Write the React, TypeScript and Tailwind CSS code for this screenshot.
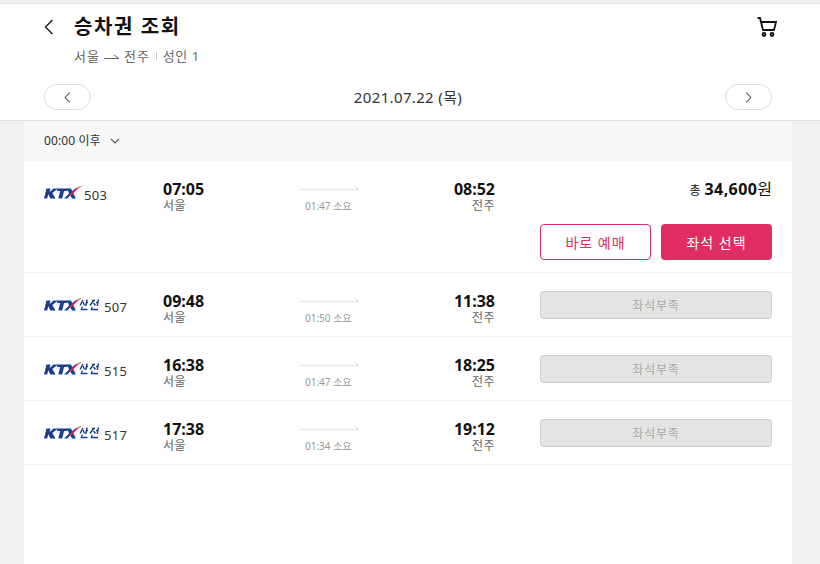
import React from "react";

const F = { fontFamily: '"Noto Sans", "Noto Sans CJK KR", sans-serif' };

function Logo({ sancheon }: { sancheon?: boolean }) {
  return (
    <svg width={sancheon ? 57 : 40} height="15" viewBox={sancheon ? "0 0 57 15" : "0 0 40 15"} className="block shrink-0 mt-[5px]">
      <g fill="#1b3f8f">
        <path d="M2.500 3.500h4l-1 3.700 4-3.700h4.500l-5.700 4.500 3.200 5.500H6.500l-2.300-4.200-1 4.200H0Z" />
        <path d="M13.500 3.500h10.500l-.7 2.600h-3.200l-1.900 7.400h-3.900l1.900-7.400h-3.300Z" />
        <path d="M23 3.500h4l1.300 2.700 2.700-2.700h2.200l-4 4.400 2.700 5.600h-4l-1.400-3.200-3.200 3.200h-3.200l5-5Z" />
      </g>
      <path d="M25 11 C28 6 33 2 39 0.500 C34 3 31 6 28.500 9.500 Z" fill="#d9244f" />
      {sancheon && (
        <g fill="none" stroke="#1b3f8f" strokeWidth="1.400">
          <path d="M39 3 L36 8.500 M39 5 L40.500 8.500 M43 2.500 L41.800 9 M42.300 5.500 H44 M38 9.500 L37.500 12.500 H43.500" />
          <path d="M48 3.500 H51 M49.500 3.500 L46 8.500 M49.500 6 L51.500 8.500 M54.500 2.500 L53.300 9 M53.800 5.500 H52 M48 10 L47.500 12.500 H54" />
        </g>
      )}
    </svg>
  );
}

function Arrow() {
  return (
    <svg width="60" height="6" viewBox="0 0 60 6" className="block">
      <path d="M0 4.500 H59" stroke="#e8e8e8" strokeWidth="1.500" fill="none" />
      <path d="M54 0.500 L59 4.500" stroke="#d5d5d5" strokeWidth="1" fill="none" />
    </svg>
  );
}

function Chevron({ dir, className }: { dir: "l" | "r"; className: string }) {
  return (
    <svg viewBox="0 0 10 16" className={className} fill="none" stroke="currentColor" strokeWidth="1.500">
      <path d={dir === "l" ? "M8.500 1 L1.500 8 L8.500 15" : "M1.500 1 L8.500 8 L1.500 15"} />
    </svg>
  );
}

function Times({ dep, arr, dur }: { dep: string; arr: string; dur: string }) {
  return (
    <>
      <div className="w-[100px] shrink-0">
        <div className="text-[16px] leading-[18px] font-bold text-[#111]">{dep}</div>
        <div className="text-[12px] leading-[12px] mt-[2px] tracking-[0.5px] text-[#666]">서울</div>
      </div>
      <div className="w-[84px] shrink-0 mt-[5px] ml-[37px] flex flex-col">
        <Arrow />
        <div className="text-[10px] leading-[12px] mt-[9px] pl-[5px] text-[#999]">{dur}</div>
      </div>
      <div className="w-[111px] shrink-0 text-right">
        <div className="text-[16px] leading-[18px] font-bold text-[#111]">{arr}</div>
        <div className="text-[12px] leading-[12px] mt-[2px] tracking-[0.5px] text-[#666]">전주</div>
      </div>
    </>
  );
}

function SoldOutRow({ num, dep, arr, dur }: { num: string; dep: string; arr: string; dur: string }) {
  return (
    <div className="h-[64px] border-b border-[#f0f0f0] flex items-start px-[20px] pt-[19px]">
      <div className="w-[119px] shrink-0 flex items-start">
        <Logo sancheon />
        <span className="text-[13px] leading-[18px] tracking-[0.3px] text-[#333] ml-[3px] mt-[6px]">{num}</span>
      </div>
      <Times dep={dep} arr={arr} dur={dur} />
      <div className="ml-auto w-[232px] h-[28px] mt-[-1px] pt-[2px] rounded-[4px] border border-[#ccc] bg-[#e4e4e4] flex items-center justify-center text-[12px] tracking-[0.8px] text-[#aaa]">
        좌석부족
      </div>
    </div>
  );
}

export default function App() {
  return (
    <div style={F} className="w-[820px] h-[564px] overflow-hidden bg-[#f1f1f1] flex flex-col">
      <div className="h-[118px] shrink-0 bg-white border-t border-b border-[#e0e0e0] mt-[3px] pl-[44px] pr-[48px] flex flex-col">
        <div className="flex items-center h-[45px]">
          <Chevron dir="l" className="w-[10px] h-[16px] text-[#222]" />
          <h1 className="ml-[20px] text-[20px] font-bold text-[#111] leading-[26px] tracking-[1.6px]">승차권 조회</h1>
          <svg viewBox="0 0 20 20" className="ml-auto mr-[-5px] w-[20px] h-[20px] text-[#111]" fill="none" stroke="currentColor" strokeWidth="1.800">
            <path d="M0.500 1 H3 L6 13 H17 L19 5 H4" />
            <circle cx="7" cy="17.500" r="1.500" />
            <circle cx="15" cy="17.500" r="1.500" />
          </svg>
        </div>
        <div className="ml-[30px] flex items-center text-[13px] leading-[18px] text-[#666] mt-[-2px]">
          <span className="tracking-[1px]">서울</span>
          <svg width="16" height="6" viewBox="0 0 16 6" className="mx-[4px] mt-[2px]" fill="none" stroke="#666" strokeWidth="1">
            <path d="M0 4.500 H15 L10 1" />
          </svg>
          <span className="tracking-[1px]">전주</span>
          <span className="mx-[6px] h-[8px] w-px bg-[#ccc]" />
          <span className="tracking-[0.5px]">성인 1</span>
        </div>
        <div className="flex items-center justify-between mt-[19px]">
          <div className="w-[47px] h-[26px] rounded-full border border-[#ddd] flex items-center justify-center text-[#555]">
            <Chevron dir="l" className="w-[7px] h-[11px]" />
          </div>
          <span className="text-[15px] text-[#333] tracking-[0.35px]">2021.07.22 (목)</span>
          <div className="w-[47px] h-[26px] rounded-full border border-[#ddd] flex items-center justify-center text-[#555]">
            <Chevron dir="r" className="w-[7px] h-[11px]" />
          </div>
        </div>
      </div>

      <div className="mx-[24px] w-[768px] flex-1 bg-white flex flex-col">
        <div className="h-[40px] shrink-0 bg-[#f7f7f7] flex items-center px-[20px] text-[12px] tracking-[0.1px] text-[#333]">
          <span>00:00 이후</span>
          <svg width="10" height="6" viewBox="0 0 10 6" className="ml-[9px]" fill="none" stroke="#555" strokeWidth="1.200">
            <path d="M1 1 L5 5 L9 1" />
          </svg>
        </div>

        <div className="h-[112px] shrink-0 border-b border-[#f0f0f0] px-[20px] pt-[19px] flex items-start">
          <div className="w-[119px] shrink-0 flex items-start">
            <Logo />
            <span className="text-[13px] leading-[18px] tracking-[0.3px] text-[#333] mt-[6px]">503</span>
          </div>
          <Times dep="07:05" arr="08:52" dur="01:47 소요" />
          <div className="ml-auto flex flex-col items-end w-[232px]">
            <div className="flex items-baseline text-[#111] h-[18px] leading-[18px]">
              <span className="text-[12px] mr-[4px]">총</span>
              <span className="text-[16px] font-bold tracking-[0.4px]">34,600</span>
              <span className="text-[16px]">원</span>
            </div>
            <div className="flex gap-[10px] mt-[26px]">
              <div className="w-[111px] h-[36px] rounded-[4px] border border-[#e02d62] bg-white text-[#e02d62] text-[14px] flex items-center justify-center tracking-[1px]">
                바로 예매
              </div>
              <div className="w-[111px] h-[36px] rounded-[4px] bg-[#e02d62] text-white text-[14px] flex items-center justify-center tracking-[1px]">
                좌석 선택
              </div>
            </div>
          </div>
        </div>

        <SoldOutRow num="507" dep="09:48" arr="11:38" dur="01:50 소요" />
        <SoldOutRow num="515" dep="16:38" arr="18:25" dur="01:47 소요" />
        <SoldOutRow num="517" dep="17:38" arr="19:12" dur="01:34 소요" />
      </div>
    </div>
  );
}
